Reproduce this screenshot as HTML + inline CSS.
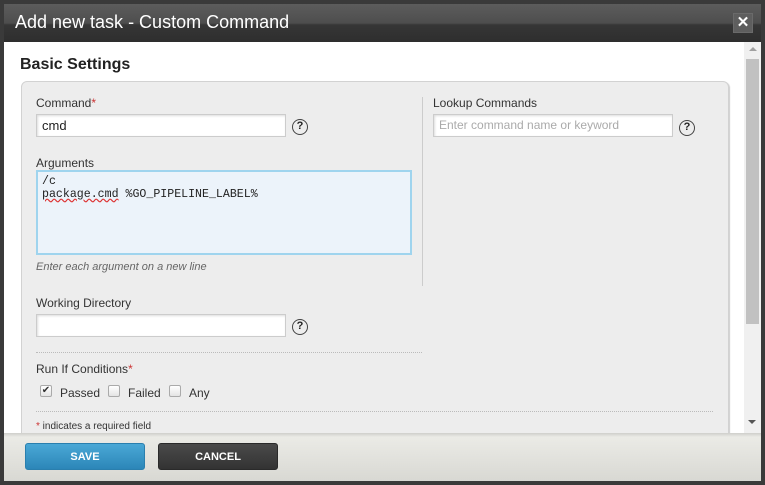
<!DOCTYPE html>
<html><head><style>
*{margin:0;padding:0;box-sizing:border-box}
body{width:765px;height:485px;background:#3a3a3a;font-family:"Liberation Sans",Arial,sans-serif;position:relative;overflow:hidden}
.abs{position:absolute}
.title{left:4px;top:4px;width:757px;height:38px;background:linear-gradient(#5c5c5c 0,#4e4e4e 50%,#363636 55%,#2e2e2e 100%)}
.title span{position:absolute;left:11px;top:8px;color:#fff;font-size:18px}
.close{left:733px;top:13px;width:20px;height:20px;background:#5e5e5e;border:1px solid #6a6a6a;color:#fff;font-weight:bold;font-size:15px;text-align:center;line-height:18px}
.content{left:4px;top:42px;width:740px;height:391px;background:#fff;overflow:hidden}
.sb{left:744px;top:42px;width:17px;height:391px;background:#f0f0f0}
.thumb{left:746px;top:59px;width:13px;height:265px;background:#c1c1c1}
h2{position:absolute;left:20px;top:56px;font-size:16px;font-weight:bold;color:#222}
.panel{left:21px;top:81px;width:708px;height:360px;background:#ededed;border:1px solid #d2d2d2;border-radius:6px;box-shadow:1px 1px 1px #ccc}
.lbl{font-size:12px;color:#333}
.req{color:#c33}
.inp{background:#fff;border:1px solid #ccc;box-shadow:inset 1px 1px 2px #ddd;font-size:13px;color:#222;padding:3px 5px}
.q{width:16px;height:16px;border:1.5px solid #444;border-radius:50%;font-size:11px;font-weight:bold;text-align:center;line-height:13px;color:#222}
.ta{left:36px;top:170px;width:376px;height:85px;background:#ecf3fa;border:2px solid #9fd4ee;font-family:"Liberation Mono",monospace;font-size:11.6px;line-height:13px;padding:3px 4px;color:#222}
.dot{border-top:1px dotted #bbb;height:0}
.cb{width:12px;height:12px;border:1px solid #aaa;border-radius:2px;background:linear-gradient(#fff,#e4e4e4)}
.footer{left:4px;top:433px;width:757px;height:48px;background:linear-gradient(#cfcfcb 0,#ebebe6 4px,#d8d8d3 100%)}
.btn{top:443px;width:120px;height:27px;border-radius:3px;color:#fff;font-size:11px;font-weight:bold;text-align:center;line-height:27px}
</style></head><body>
<div class="abs title"><span>Add new task - Custom Command</span></div>
<div class="abs close">✕</div>
<div class="abs content"></div>
<div class="abs sb"></div>
<div class="abs thumb"></div>
<div class="abs" style="left:749px;top:47px;width:0;height:0;border-left:4px solid transparent;border-right:4px solid transparent;border-bottom:4px solid #a0a0a0"></div>
<div class="abs" style="left:748px;top:420px;width:0;height:0;border-left:4px solid transparent;border-right:4px solid transparent;border-top:4px solid #555"></div>
<h2>Basic Settings</h2>
<div class="abs panel"></div>
<div class="abs lbl" style="left:36px;top:96px">Command<span class="req">*</span></div>
<div class="abs inp" style="left:36px;top:114px;width:250px;height:23px">cmd</div>
<div class="abs q" style="left:292px;top:119px">?</div>
<div class="abs lbl" style="left:36px;top:156px">Arguments</div>
<div class="abs ta">/c<br><span style="text-decoration:underline wavy #d33">package.cmd</span> %GO_PIPELINE_LABEL%</div>
<div class="abs" style="left:36px;top:261px;font-size:11px;font-style:italic;color:#666">Enter each argument on a new line</div>
<div class="abs lbl" style="left:36px;top:296px">Working Directory</div>
<div class="abs inp" style="left:36px;top:314px;width:250px;height:23px"></div>
<div class="abs q" style="left:292px;top:319px">?</div>
<div class="abs dot" style="left:36px;top:352px;width:386px"></div>
<div class="abs lbl" style="left:36px;top:362px">Run If Conditions<span class="req">*</span></div>
<div class="abs cb" style="left:40px;top:385px;font-size:10px;line-height:10px;text-align:center;color:#333">✔</div>
<div class="abs lbl" style="left:60px;top:386px">Passed</div>
<div class="abs cb" style="left:108px;top:385px"></div>
<div class="abs lbl" style="left:128px;top:386px">Failed</div>
<div class="abs cb" style="left:169px;top:385px"></div>
<div class="abs lbl" style="left:189px;top:386px">Any</div>
<div class="abs dot" style="left:36px;top:411px;width:677px"></div>
<div class="abs" style="left:36px;top:421px;font-size:10px;color:#333"><span class="req">*</span> indicates a required field</div>
<div class="abs" style="left:422px;top:97px;width:1px;height:189px;background:#ccc"></div>
<div class="abs lbl" style="left:433px;top:96px">Lookup Commands</div>
<div class="abs inp" style="left:433px;top:114px;width:240px;height:23px;font-size:12px;color:#aaa">Enter command name or keyword</div>
<div class="abs q" style="left:679px;top:120px">?</div>
<div class="abs footer"></div>
<div class="abs btn" style="left:25px;background:linear-gradient(#4aa8d6,#2c86b8);border:1px solid #2a7fae">SAVE</div>
<div class="abs btn" style="left:158px;background:linear-gradient(#4a4a4a,#333);border:1px solid #2a2a2a">CANCEL</div>
</body></html>
